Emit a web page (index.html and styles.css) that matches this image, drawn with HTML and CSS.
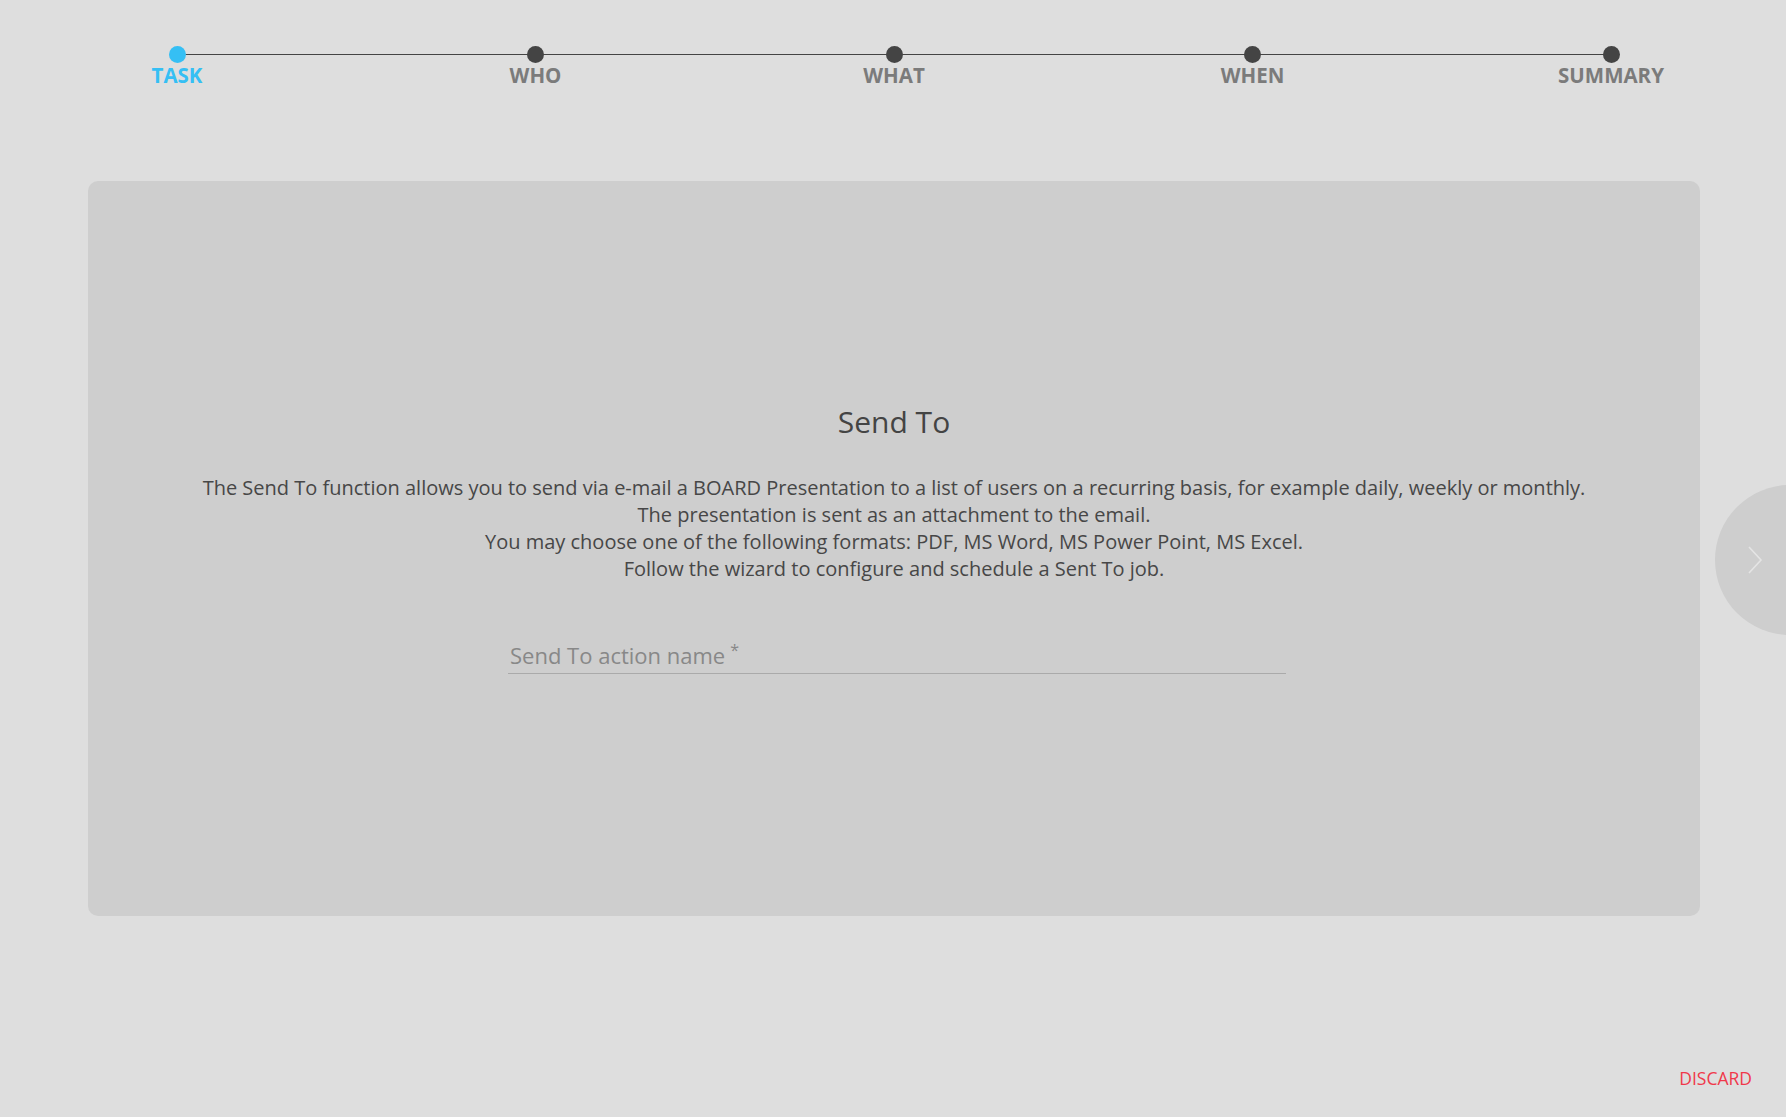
FILE: index.html
```html
<!DOCTYPE html>
<html lang="en">

<head>
    <meta charset="UTF-8">
    <meta name="viewport" content="width=device-width, initial-scale=1.0">
    <title>Send To</title>
    <link rel="stylesheet" href="styles.css">
</head>

<body>
    <div class="stepper">
        <div class="step active">
            <span class="dot"></span>
            <span class="step-label">TASK</span>
        </div>
        <div class="step">
            <span class="dot"></span>
            <span class="step-label">WHO</span>
        </div>
        <div class="step">
            <span class="dot"></span>
            <span class="step-label">WHAT</span>
        </div>
        <div class="step">
            <span class="dot"></span>
            <span class="step-label">WHEN</span>
        </div>
        <div class="step">
            <span class="dot"></span>
            <span class="step-label">SUMMARY</span>
        </div>
    </div>

    <div class="panel">
        <h2 class="panel-title">Send To</h2>
        <p class="panel-text">
            The Send To function allows you to send via e-mail a BOARD Presentation to a list of users on a recurring basis, for example daily, weekly or monthly.<br>
            The presentation is sent as an attachment to the email.<br>
            You may choose one of the following formats: PDF, MS Word, MS Power Point, MS Excel.<br>
            Follow the wizard to configure and schedule a Sent To job.
        </p>
        <div class="field">
            <span class="field-label">Send To action name</span><sup class="required">*</sup>
        </div>
    </div>

    <button class="next-button" aria-label="Next">
        <svg width="16" height="28" viewBox="0 0 16 28">
            <path d="M2 1 L14 14 L2 27" fill="none" stroke="#e4e4e4" stroke-width="1.6" />
        </svg>
    </button>

    <div class="footer">
        <span class="discard">DISCARD</span>
    </div>
</body>

</html>
```

FILE: styles.css
```css
:root {
    --bg-color: #dedede;
    --panel-bg: #cecece;
    --text-color: #474747;
    --step-color: #7b7b7b;
    --dot-color: #444444;
    --active-color: #35bff4;
    --discard-color: #f0384a;
}

body {
    background-color: var(--bg-color);
    color: var(--text-color);
    font-family: 'Open Sans', 'Noto Sans', sans-serif;
    margin: 0;
    width: 1786px;
    height: 1117px;
    overflow: hidden;
    position: relative;
}

.stepper {
    position: relative;
    width: 1574px;
    margin: 0 0 0 107px;
    padding-top: 46px;
    display: flex;
    justify-content: space-between;
}

.stepper::before {
    content: "";
    position: absolute;
    left: 70px;
    right: 70px;
    top: 54px;
    height: 1px;
    background-color: var(--dot-color);
}

.step {
    width: 140px;
    display: flex;
    flex-direction: column;
    align-items: center;
    position: relative;
}

.dot {
    width: 17px;
    height: 17px;
    border-radius: 50%;
    background-color: var(--dot-color);
}

.step-label {
    margin-top: 0;
    font-size: 20.5px;
    line-height: 24px;
    font-weight: 700;
    color: var(--step-color);
}

.step.active .dot {
    background-color: var(--active-color);
}

.step.active .step-label {
    color: var(--active-color);
}

.panel {
    box-sizing: border-box;
    width: 1612px;
    height: 735px;
    margin: 94px 0 0 88px;
    padding-top: 221px;
    background-color: var(--panel-bg);
    border-radius: 10px;
    display: flex;
    flex-direction: column;
    align-items: center;
    text-align: center;
}

.panel-title {
    margin: 0;
    font-size: 30px;
    line-height: 40px;
    font-weight: 400;
    color: #444;
}

.panel-text {
    margin: 32px 0 0;
    font-size: 20px;
    line-height: 27px;
}

.field {
    box-sizing: border-box;
    width: 778px;
    margin: 54px 0 0 6px;
    padding: 0 0 4px 2px;
    border-bottom: 1px solid #aaaaaa;
    text-align: left;
    font-size: 22px;
    line-height: 28px;
    color: #888888;
}

.required {
    font-size: 16px;
    margin-left: 5px;
}

.next-button {
    position: absolute;
    left: 1715px;
    top: 485px;
    width: 150px;
    height: 150px;
    border: none;
    border-radius: 50%;
    background-color: var(--panel-bg);
    padding: 0 0 0 32px;
    display: flex;
    align-items: center;
    cursor: pointer;
}

.footer {
    margin-top: 150px;
    padding-right: 34px;
    text-align: right;
}

.discard {
    font-size: 17.5px;
    line-height: 24px;
    color: var(--discard-color);
    cursor: pointer;
}
```
